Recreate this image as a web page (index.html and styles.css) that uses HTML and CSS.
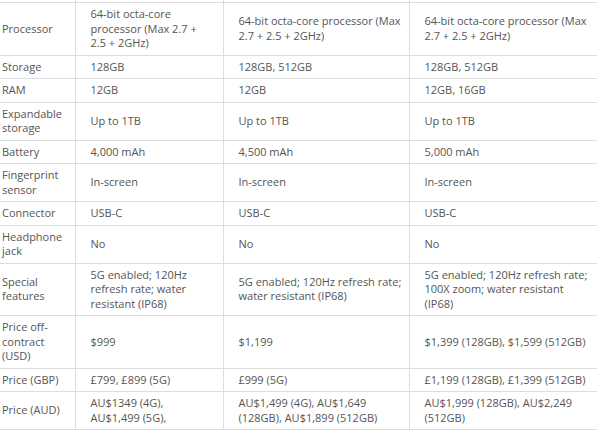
FILE: index.html
```html
<!DOCTYPE html>
<html>
<head>
<meta charset="utf-8">
<link rel="stylesheet" href="styles.css">
</head>
<body>
<table class="specs">
  <colgroup>
    <col class="c1"><col class="c2"><col class="c3"><col class="c4">
  </colgroup>
  <tr class="cut"><td></td><td></td><td></td><td></td></tr>
  <tr><td>Processor</td><td>64-bit octa-core<br>processor (Max 2.7 +<br>2.5 + 2GHz)</td><td>64-bit octa-core processor (Max<br>2.7 + 2.5 + 2GHz)</td><td>64-bit octa-core processor (Max<br>2.7 + 2.5 + 2GHz)</td></tr>
  <tr><td>Storage</td><td>128GB</td><td>128GB, 512GB</td><td>128GB, 512GB</td></tr>
  <tr><td>RAM</td><td>12GB</td><td>12GB</td><td>12GB, 16GB</td></tr>
  <tr><td>Expandable<br>storage</td><td>Up to 1TB</td><td>Up to 1TB</td><td>Up to 1TB</td></tr>
  <tr><td>Battery</td><td>4,000 mAh</td><td>4,500 mAh</td><td>5,000 mAh</td></tr>
  <tr><td>Fingerprint<br>sensor</td><td>In-screen</td><td>In-screen</td><td>In-screen</td></tr>
  <tr><td>Connector</td><td>USB-C</td><td>USB-C</td><td>USB-C</td></tr>
  <tr><td>Headphone<br>jack</td><td>No</td><td>No</td><td>No</td></tr>
  <tr><td>Special<br>features</td><td>5G enabled; 120Hz<br>refresh rate; water<br>resistant (IP68)</td><td>5G enabled; 120Hz refresh rate;<br>water resistant (IP68)</td><td>5G enabled; 120Hz refresh rate;<br>100X zoom; water resistant<br>(IP68)</td></tr>
  <tr><td>Price off-<br>contract<br>(USD)</td><td>$999</td><td>$1,199</td><td>$1,399 (128GB), $1,599 (512GB)</td></tr>
  <tr><td>Price (GBP)</td><td>£799, £899 (5G)</td><td>£999 (5G)</td><td>£1,199 (128GB), £1,399 (512GB)</td></tr>
  <tr><td>Price (AUD)</td><td>AU$1349 (4G),<br>AU$1,499 (5G),</td><td>AU$1,499 (4G), AU$1,649<br>(128GB), AU$1,899 (512GB)</td><td>AU$1,999 (128GB), AU$2,249<br>(512GB)</td></tr>
</table>
</body>
</html>
```

FILE: styles.css
```css
html, body {
  margin: 0;
  padding: 0;
  background: #ffffff;
}

body {
  overflow: hidden;
}

.specs {
  border-collapse: collapse;
  table-layout: fixed;
  width: 610px;
  margin-left: -13px;
  font-family: "Open Sans", "Liberation Sans", sans-serif;
  font-size: 11px;
  line-height: 14.5px;
  color: #555555;
}

.c1 { width: 88px; }
.c2 { width: 148px; }
.c3 { width: 186px; }
.c4 { width: 188px; }

.specs td {
  padding: 4px 15px;
  vertical-align: middle;
  border-bottom: 1px solid #dddddd;
  white-space: nowrap;
  overflow: hidden;
}

.specs td + td {
  border-left: 1px solid #dddddd;
}

.specs .cut td {
  height: 2px;
  padding: 0;
  line-height: 0;
}
```
